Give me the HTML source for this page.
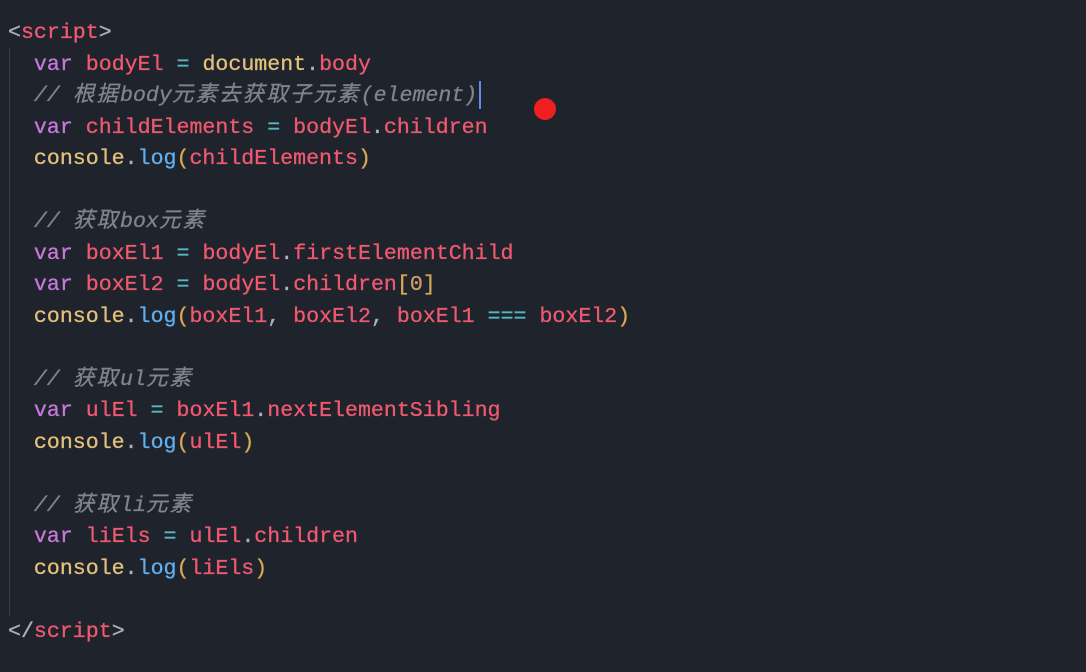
<!DOCTYPE html>
<html><head><meta charset="utf-8"><style>
html,body{margin:0;padding:0;background:#1f232b;width:1086px;height:672px;overflow:hidden}
.c{position:absolute;left:8px;top:18px;font-family:"Liberation Mono","Noto Sans CJK SC",monospace;font-size:21.6px;line-height:31.5px;white-space:pre;color:#abb2bf;-webkit-text-stroke:0.3px}
.g{position:absolute;left:9px;top:48px;width:1px;height:568px;background:#3a3f4a}
.k{color:#c678dd}.v{color:#ef596f}.y{color:#e5c07b}.o{color:#56b6c2}.f{color:#61afef}.p{color:#d8a657}.n{color:#d19a66}
.cm{color:#7f848e;font-style:italic}.t{color:#abb2bf}.w{color:#abb2bf}
.z{letter-spacing:2px}
.dot{position:absolute;left:534px;top:98px;width:22px;height:22px;border-radius:50%;background:#f01f1f}
.cur{position:absolute;left:479px;top:81px;width:2px;height:28px;background:#5a8dee}
</style></head><body>
<div class="g"></div>
<div class="c"><span class="t">&lt;</span><span class="v">script</span><span class="t">&gt;</span>
  <span class="k">var</span> <span class="v">bodyEl</span> <span class="o">=</span> <span class="y">document</span><span class="w">.</span><span class="v">body</span>
  <span class="cm">// <span class="z">根据</span>body<span class="z">元素去获取子元素</span>(element)</span>
  <span class="k">var</span> <span class="v">childElements</span> <span class="o">=</span> <span class="v">bodyEl</span><span class="w">.</span><span class="v">children</span>
  <span class="y">console</span><span class="w">.</span><span class="f">log</span><span class="p">(</span><span class="v">childElements</span><span class="p">)</span>

  <span class="cm">// <span class="z">获取</span>box<span class="z">元素</span></span>
  <span class="k">var</span> <span class="v">boxEl1</span> <span class="o">=</span> <span class="v">bodyEl</span><span class="w">.</span><span class="v">firstElementChild</span>
  <span class="k">var</span> <span class="v">boxEl2</span> <span class="o">=</span> <span class="v">bodyEl</span><span class="w">.</span><span class="v">children</span><span class="p">[</span><span class="n">0</span><span class="p">]</span>
  <span class="y">console</span><span class="w">.</span><span class="f">log</span><span class="p">(</span><span class="v">boxEl1</span><span class="w">,</span> <span class="v">boxEl2</span><span class="w">,</span> <span class="v">boxEl1</span> <span class="o">===</span> <span class="v">boxEl2</span><span class="p">)</span>

  <span class="cm">// <span class="z">获取</span>ul<span class="z">元素</span></span>
  <span class="k">var</span> <span class="v">ulEl</span> <span class="o">=</span> <span class="v">boxEl1</span><span class="w">.</span><span class="v">nextElementSibling</span>
  <span class="y">console</span><span class="w">.</span><span class="f">log</span><span class="p">(</span><span class="v">ulEl</span><span class="p">)</span>

  <span class="cm">// <span class="z">获取</span>li<span class="z">元素</span></span>
  <span class="k">var</span> <span class="v">liEls</span> <span class="o">=</span> <span class="v">ulEl</span><span class="w">.</span><span class="v">children</span>
  <span class="y">console</span><span class="w">.</span><span class="f">log</span><span class="p">(</span><span class="v">liEls</span><span class="p">)</span>

<span class="t">&lt;/</span><span class="v">script</span><span class="t">&gt;</span></div>
<div class="cur"></div>
<div class="dot"></div>
</body></html>
